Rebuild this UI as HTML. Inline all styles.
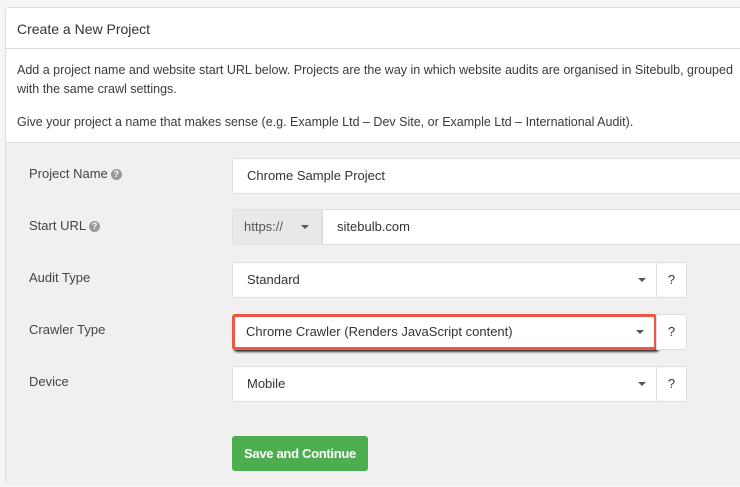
<!DOCTYPE html>
<html><head><style>
body{margin:0;width:740px;height:487px;background:#f5f5f5;font-family:"Liberation Sans",sans-serif;color:#333;overflow:hidden;position:relative}
.panel{position:absolute;left:5px;top:7px;width:740px;height:476px;border:1px solid #ddd;background:#fff;border-radius:3px}
.hd{height:40px;border-bottom:1px solid #ddd;font-size:14px;line-height:42px;padding-left:11px}
.intro{padding:12px 11px;font-size:12.5px;line-height:19px;height:70px;white-space:nowrap;color:#3a3a3a}
.intro p{margin:0 0 14px}
.form{position:absolute;left:0;top:134px;width:740px;height:342px;background:#f0f0f0;border-top:1px solid #ddd}
.lbl{position:absolute;left:23px;font-size:13px;color:#444}
.q{display:inline-block;width:11px;height:11px;border-radius:50%;background:#999;color:#fff;font-size:9px;line-height:11px;text-align:center;font-weight:bold;vertical-align:1px;margin-left:3px}
.inp{position:absolute;left:226px;height:36px;background:#fff;border:1px solid #ddd;border-radius:3px;box-sizing:border-box;font-size:13px;line-height:34px;padding-left:14px;color:#333}
.car{position:absolute;right:10px;top:15px;border-left:4px solid transparent;border-right:4px solid transparent;border-top:4px solid #555}
.qb{position:absolute;left:650px;width:31px;height:36px;background:#fff;border:1px solid #ddd;border-radius:0 3px 3px 0;box-sizing:border-box;text-align:center;line-height:34px;font-size:13px}
.btn{position:absolute;left:226px;top:291px;width:136px;height:35px;background:#4cae4f;border-radius:3px;color:#fff;font-size:13px;font-weight:bold;line-height:35px;text-align:center;letter-spacing:-0.3px}
</style></head><body>
<div class="panel">
<div class="hd">Create a New Project</div>
<div class="intro"><p>Add a project name and website start URL below. Projects are the way in which website audits are organised in Sitebulb, grouped<br>with the same crawl settings.</p><p>Give your project a name that makes sense (e.g. Example Ltd – Dev Site, or Example Ltd – International Audit).</p></div>
<div class="form">
<div class="lbl" style="top:23px">Project Name<span class="q">?</span></div>
<div class="inp" style="top:15px;width:520px">Chrome Sample Project</div>
<div class="lbl" style="top:75px">Start URL<span class="q">?</span></div>
<div class="inp" style="top:66px;width:90px;background:#e8e8e8;border-color:#e0e0e0;color:#555;border-radius:3px 0 0 3px;padding-left:11px">https://<div class="car" style="right:12px"></div></div>
<div class="inp" style="top:66px;left:316px;width:430px;border-radius:0">sitebulb.com</div>
<div class="lbl" style="top:127px">Audit Type</div>
<div class="inp" style="top:119px;width:425px;border-radius:3px 0 0 3px">Standard<div class="car"></div></div>
<div class="qb" style="top:119px">?</div>
<div class="lbl" style="top:179px">Crawler Type</div>
<div class="inp" style="top:171px;width:425px;border:3px solid #ee5544;line-height:30px;padding-left:11px;box-shadow:2px 2px 2px #333">Chrome Crawler (Renders JavaScript content)<div class="car" style="top:13px"></div></div>
<div class="qb" style="top:171px">?</div>
<div class="lbl" style="top:231px">Device</div>
<div class="inp" style="top:223px;width:425px;border-radius:3px 0 0 3px">Mobile<div class="car"></div></div>
<div class="qb" style="top:223px">?</div>
<div class="btn" style="top:293px">Save and Continue</div>
</div>
</div>
</body></html>
